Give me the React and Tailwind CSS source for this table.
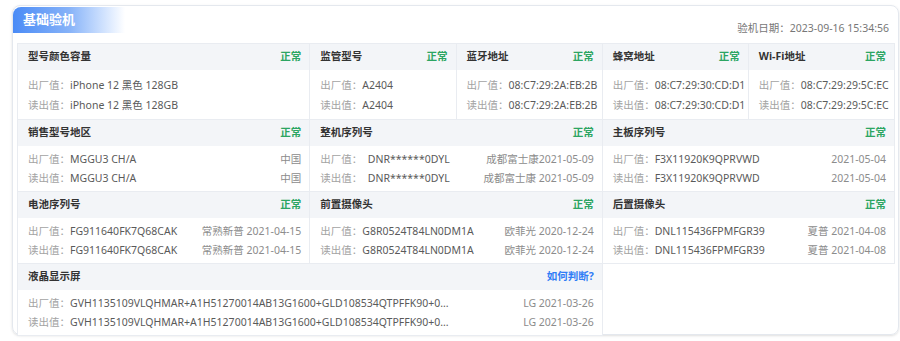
import React from "react";

const rows = [
  [
    { title: "型号颜色容量", span: "col-span-2", made: "iPhone 12 黑色 128GB", read: "iPhone 12 黑色 128GB" },
    { title: "监管型号", span: "col-span-1", made: "A2404", read: "A2404" },
    { title: "蓝牙地址", span: "col-span-1", made: "08:C7:29:2A:EB:2B", read: "08:C7:29:2A:EB:2B" },
    { title: "蜂窝地址", span: "col-span-1", made: "08:C7:29:30:CD:D1", read: "08:C7:29:30:CD:D1" },
    { title: "Wi-Fi地址", span: "col-span-1", made: "08:C7:29:29:5C:EC", read: "08:C7:29:29:5C:EC" },
  ],
  [
    { title: "销售型号地区", span: "col-span-2", made: "MGGU3 CH/A", read: "MGGU3 CH/A", madeExtra: "中国", readExtra: "中国" },
    { title: "整机序列号", span: "col-span-2", made: "\u00a0 DNR******0DYL", read: "\u00a0 DNR******0DYL", madeExtra: "成都富士康2021-05-09", readExtra: "成都富士康 2021-05-09" },
    { title: "主板序列号", span: "col-span-2", made: "F3X11920K9QPRVWD", read: "F3X11920K9QPRVWD", madeExtra: "2021-05-04", readExtra: "2021-05-04" },
  ],
  [
    { title: "电池序列号", span: "col-span-2", made: "FG911640FK7Q68CAK", read: "FG911640FK7Q68CAK", madeExtra: "常熟新普 2021-04-15", readExtra: "常熟新普 2021-04-15" },
    { title: "前置摄像头", span: "col-span-2", made: "G8R0524T84LN0DM1A", read: "G8R0524T84LN0DM1A", madeExtra: "欧菲光 2020-12-24", readExtra: "欧菲光 2020-12-24" },
    { title: "后置摄像头", span: "col-span-2", made: "DNL115436FPMFGR39", read: "DNL115436FPMFGR39", madeExtra: "夏普 2021-04-08", readExtra: "夏普 2021-04-08" },
  ],
  [
    {
      title: "液晶显示屏",
      span: "col-span-4",
      status: "link",
      made: "GVH1135109VLQHMAR+A1H51270014AB13G1600+GLD108534QTPFFK90+0...",
      read: "GVH1135109VLQHMAR+A1H51270014AB13G1600+GLD108534QTPFFK90+0...",
      madeExtra: "LG 2021-03-26",
      readExtra: "LG 2021-03-26",
    },
  ],
];

function Cell({ item, first }) {
  return (
    <div className={`${item.span} border-r border-b border-[#e9ecf1]`}>
      {/* header */}
      <div className="h-[26px] bg-[#f3f5f8] flex items-center justify-between pl-[10px] pr-[8px]">
        <span className="font-bold text-[#333]">{item.title}</span>
        {item.status === "link" ? (
          <span className="font-bold text-[#2f7cf6]">如何判断?</span>
        ) : (
          <span className="font-bold text-[#2ca562]">正常</span>
        )}
      </div>
      {/* values */}
      <div
        className={
          first
            ? "bg-white pl-[10px] pr-[8px] pt-[5px] pb-[4px] leading-[20px]"
            : "bg-white pl-[10px] pr-[8px] pt-[4px] pb-[3px] leading-[19px]"
        }
      >
        <div className="flex justify-between whitespace-nowrap">
          <span>
            <span className="text-[#a3a3a3]">出厂值：</span>
            <span className="text-[#5a5a5a]">{item.made}</span>
          </span>
          {item.madeExtra && <span className="text-[#8c8c8c]">{item.madeExtra}</span>}
        </div>
        <div className="flex justify-between whitespace-nowrap">
          <span>
            <span className="text-[#a3a3a3]">读出值：</span>
            <span className="text-[#5a5a5a]">{item.read}</span>
          </span>
          {item.readExtra && <span className="text-[#8c8c8c]">{item.readExtra}</span>}
        </div>
      </div>
    </div>
  );
}

export default function App() {
  return (
    <div
      className="w-[900px] h-[341px] bg-white pl-3 pr-[1px] pt-[5px] text-[10.5px]"
      style={{ fontFamily: '"Noto Sans", "Noto Sans CJK SC", sans-serif' }}
    >
      <div className="h-[330px] border border-[#e4e8ee] rounded-lg shadow-sm pl-[4px] pr-[3px]">
        {/* title bar */}
        <div className="flex items-start justify-between h-[37px]">
          <div className="mt-[1px] -ml-[4px] h-[26px] w-[112px] rounded-tl-lg bg-gradient-to-r from-[#4a8bf6] via-[#86b2f8] to-white flex items-center pl-[10px]">
            <span className="text-white font-bold text-[13px]">基础验机</span>
          </div>
          <div className="mt-[15px] pr-[6px] text-[#777]">
            验机日期：2023-09-16 15:34:56
          </div>
        </div>

        {/* grid of checks */}
        <div className="grid grid-cols-6 border-l border-t border-[#e9ecf1]">
          {rows.map((row, i) =>
            row.map((item) => <Cell key={item.title} item={item} first={i === 0} />)
          )}
        </div>
      </div>
    </div>
  );
}
